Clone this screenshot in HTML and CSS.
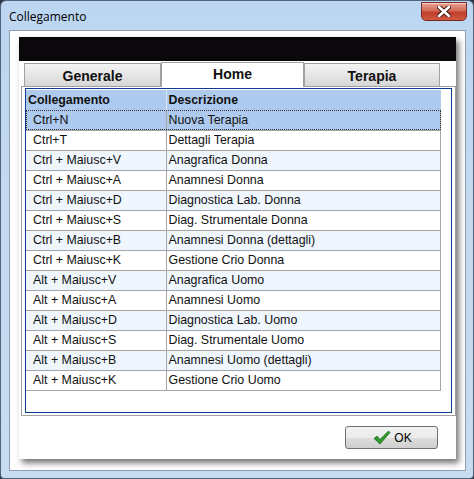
FILE: index.html
```html
<!DOCTYPE html>
<html lang="it">
<head>
    <meta charset="UTF-8">
    <title>Collegamento</title>
    <link rel="stylesheet" href="styles.css">
</head>
<body>

    <div class="window">
        <div class="titlebar">
            <span class="title">Collegamento</span>
            <button class="close" aria-label="Chiudi">
                <svg width="14" height="11" viewBox="0 0 14 11">
                    <path d="M2 1 L12 10 M12 1 L2 10" stroke="#3b1a16" stroke-width="4.5" stroke-linecap="round"/>
                    <path d="M2 1 L12 10 M12 1 L2 10" stroke="#fff" stroke-width="2.6" stroke-linecap="round"/>
                </svg>
            </button>
        </div>

        <div class="client">
            <div class="dialog">
                <div class="dialog-head"></div>

                <div class="tabs">
                    <div class="tab">Generale</div>
                    <div class="tab active">Home</div>
                    <div class="tab">Terapia</div>
                </div>

                <div class="tab-body">
                    <div class="list">
                        <table class="shortcuts">
                            <thead>
                                <tr><th class="key">Collegamento</th><th>Descrizione</th></tr>
                            </thead>
                            <tbody>
                                <tr class="selected"><td class="key">Ctrl+N</td><td>Nuova Terapia</td></tr>
                                <tr><td class="key">Ctrl+T</td><td>Dettagli Terapia</td></tr>
                                <tr><td class="key">Ctrl + Maiusc+V</td><td>Anagrafica Donna</td></tr>
                                <tr><td class="key">Ctrl + Maiusc+A</td><td>Anamnesi Donna</td></tr>
                                <tr><td class="key">Ctrl + Maiusc+D</td><td>Diagnostica Lab. Donna</td></tr>
                                <tr><td class="key">Ctrl + Maiusc+S</td><td>Diag. Strumentale Donna</td></tr>
                                <tr><td class="key">Ctrl + Maiusc+B</td><td>Anamnesi Donna (dettagli)</td></tr>
                                <tr><td class="key">Ctrl + Maiusc+K</td><td>Gestione Crio Donna</td></tr>
                                <tr><td class="key">Alt + Maiusc+V</td><td>Anagrafica Uomo</td></tr>
                                <tr><td class="key">Alt + Maiusc+A</td><td>Anamnesi Uomo</td></tr>
                                <tr><td class="key">Alt + Maiusc+D</td><td>Diagnostica Lab. Uomo</td></tr>
                                <tr><td class="key">Alt + Maiusc+S</td><td>Diag. Strumentale Uomo</td></tr>
                                <tr><td class="key">Alt + Maiusc+B</td><td>Anamnesi Uomo (dettagli)</td></tr>
                                <tr><td class="key">Alt + Maiusc+K</td><td>Gestione Crio Uomo</td></tr>
                            </tbody>
                        </table>
                    </div>
                </div>

                <div class="actions">
                    <button class="ok">
                        <svg width="18" height="15" viewBox="0 0 18 15">
                            <path d="M1 8.5 L4 6 L7 9.5 L15.5 1 L17 2.5 L7 14 Z" fill="#2e9a2a" stroke="#1d6e1a" stroke-width="0.8" stroke-linejoin="round"/>
                        </svg>
                        OK
                    </button>
                </div>
            </div>
        </div>
    </div>

</body>
</html>
```

FILE: styles.css
```css
body {
    margin: 0;
    width: 474px;
    height: 479px;
    background: #2b3340;
    font-family: 'Liberation Sans', Arial, sans-serif;
    font-size: 12px;
    color: #111;
    overflow: hidden;
}

/* finestra stile Windows 7 */
.window {
    box-sizing: border-box;
    width: 474px;
    height: 479px;
    padding: 0 7px 7px 8px;
    background: linear-gradient(180deg, #bcd6f1 0%, #c3d9f0 40%, #c8dcf1 100%);
    border: 1px solid #51647c;
    border-radius: 6px 6px 4px 4px;
    display: flex;
    flex-direction: column;
}

.titlebar {
    height: 29px;
    display: flex;
    align-items: flex-start;
    justify-content: space-between;
}

.title {
    margin-top: 7px;
    font-family: 'Open Sans', 'Liberation Sans', sans-serif;
    font-size: 12px;
    color: #000;
}

.close {
    width: 46px;
    height: 19px;
    margin-top: 1px;
    margin-right: -1px;
    padding: 0;
    border: 1px solid #7a2a22;
    border-radius: 0 0 5px 5px;
    background: linear-gradient(180deg, #e8a497 0%, #d26b58 45%, #c1402b 55%, #cf5a40 100%);
    box-shadow: inset 0 1px 0 rgba(255,255,255,0.5);
    display: flex;
    align-items: center;
    justify-content: center;
}

.client {
    flex: 1;
    background: #fff;
    border: 1px solid #8e9fb3;
    padding: 6px 10px 0 9px;
}

.dialog {
    width: 437px;
    height: 422px;
    background: #fff;
    box-shadow: 3px 4px 6px rgba(0,0,0,0.55);
    display: flex;
    flex-direction: column;
}

.dialog-head {
    height: 24px;
    background: #0b080b;
}

.tabs {
    display: flex;
    align-items: flex-end;
    padding-left: 5px;
    height: 25px;
}

.tab {
    box-sizing: border-box;
    width: 137px;
    height: 23px;
    border: 1px solid #a0a0a0;
    border-bottom: none;
    background: linear-gradient(180deg, #f4f4f4 0%, #e6e6e6 50%, #d6d6d6 100%);
    font-size: 14px;
    font-weight: bold;
    text-align: center;
    line-height: 25px;
    color: #111;
}

.tab.active {
    width: 143px;
    height: 25px;
    background: #fff;
    line-height: 22px;
    margin-bottom: -1px;
    position: relative;
}

.tab:last-child {
    width: 136px;
}

.tab-body {
    margin: 0 0 0 2px;
    width: 435px;
    height: 330px;
    box-sizing: border-box;
    border: 1px solid #a0a0a0;
    padding: 1px 3px 2px 3px;
}

.list {
    height: 100%;
    box-sizing: border-box;
    border: 1px solid #0b3c8f;
    padding: 1px 0 0 0;
}

.shortcuts {
    border-collapse: collapse;
    width: 415px;
    table-layout: fixed;
    font-size: 12.4px;
}

.shortcuts th,
.shortcuts td {
    height: 20px;
    padding: 0 2px;
    text-align: left;
    white-space: nowrap;
    box-sizing: border-box;
}

.shortcuts th {
    background: #aecbef;
    font-weight: bold;
    border-left: 1px solid #dbe8f8;
}

.shortcuts th.key {
    width: 140px;
    border-left: none;
}

.shortcuts td {
    border-bottom: 1px solid #a5a5a5;
    border-left: 1px solid #a5a5a5;
    border-right: 1px solid #a5a5a5;
}

.shortcuts td.key {
    padding-left: 7px;
    border-left: none;
}

.shortcuts tbody tr:nth-child(odd) {
    background: #f0f6fd;
}

.shortcuts tbody tr.selected {
    background: #aecbef;
    outline: 1px dotted #333;
    outline-offset: -1px;
}

.actions {
    display: flex;
    justify-content: flex-end;
    padding: 10px 18px 0 0;
}

.ok {
    width: 93px;
    height: 23px;
    border: 1px solid #707070;
    border-radius: 3px;
    background: linear-gradient(180deg, #f2f2f2 0%, #ebebeb 50%, #dddddd 51%, #cfcfcf 100%);
    font-family: 'Liberation Sans', Arial, sans-serif;
    font-size: 12px;
    color: #000;
    display: flex;
    align-items: center;
    justify-content: center;
    gap: 3px;
    padding: 0 0 0 2px;
}
```
